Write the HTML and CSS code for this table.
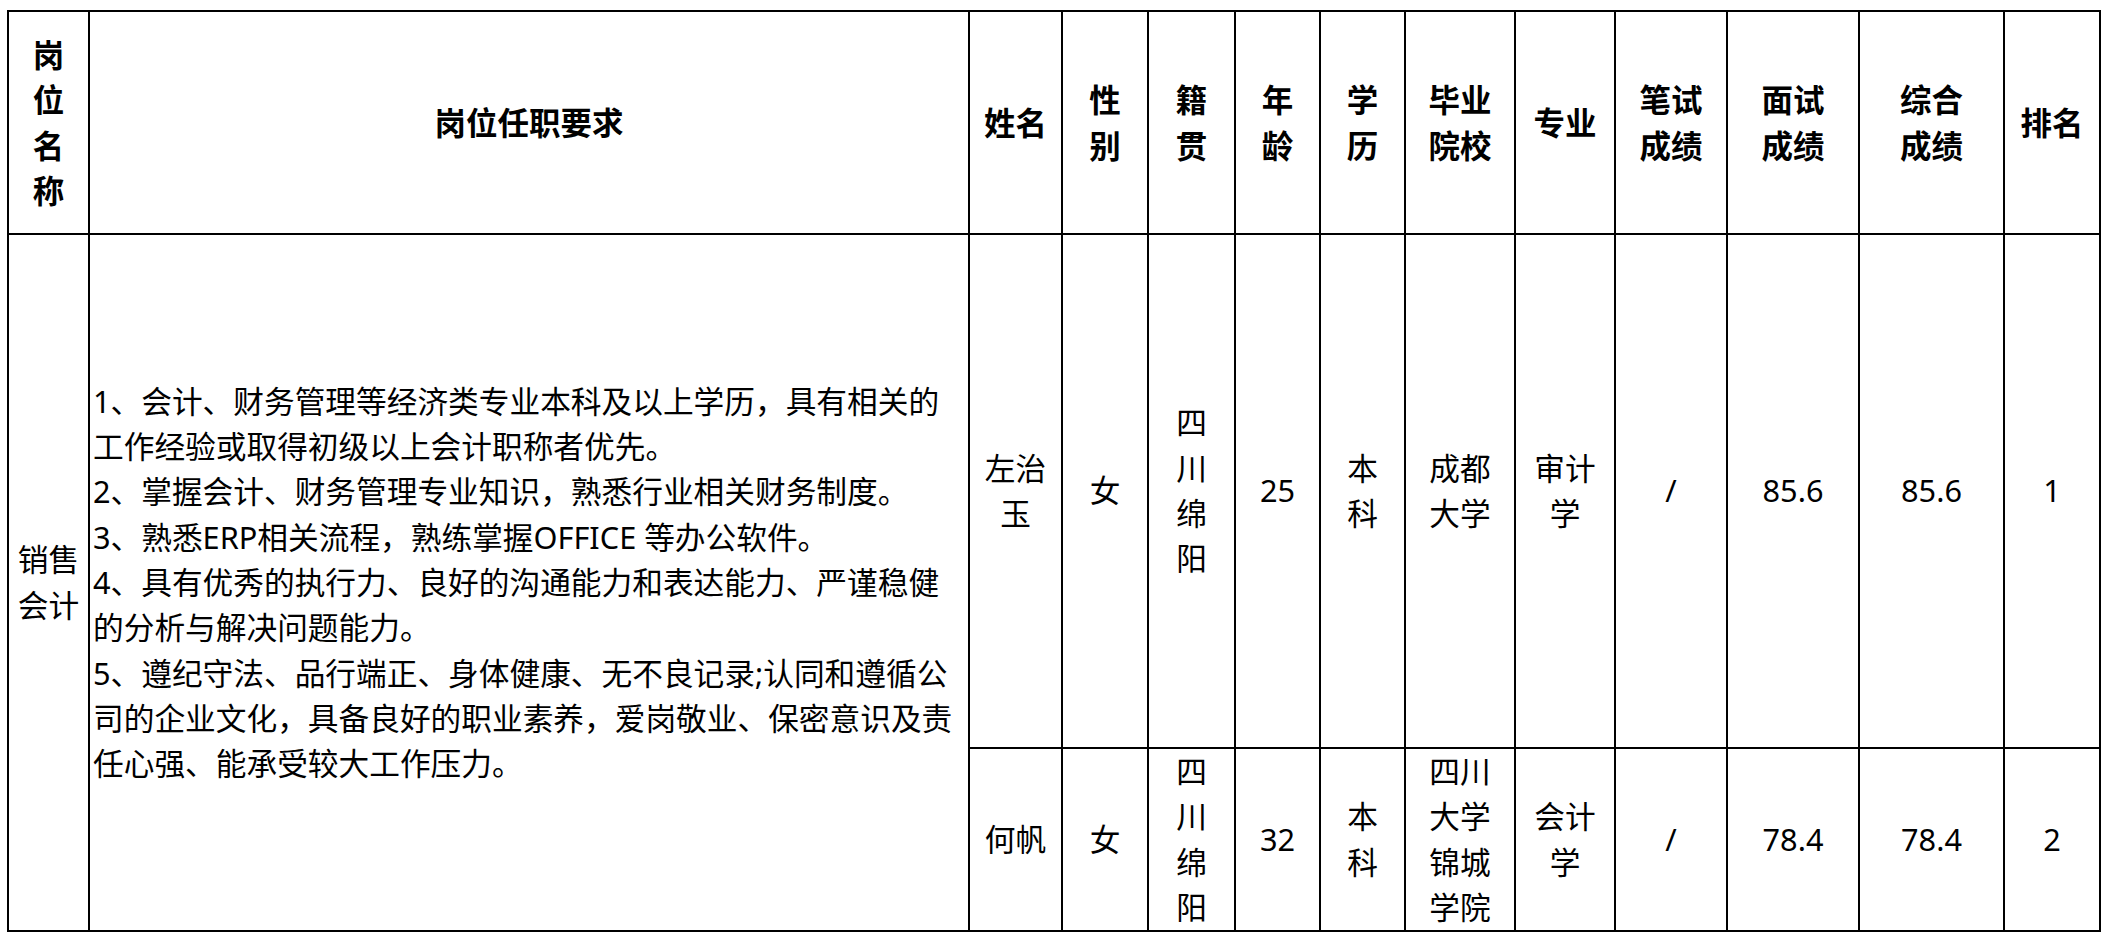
FILE: index.html
```html
<!DOCTYPE html>
<html lang="zh-CN">
<head>
<meta charset="utf-8">
<title>岗位任职要求</title>
<link rel="stylesheet" href="styles.css">
</head>
<body>
<table class="sheet">
  <colgroup>
    <col class="c-post">
    <col class="c-req">
    <col class="c-name">
    <col class="c-sex">
    <col class="c-home">
    <col class="c-age">
    <col class="c-edu">
    <col class="c-school">
    <col class="c-major">
    <col class="c-written">
    <col class="c-interview">
    <col class="c-total">
    <col class="c-rank">
  </colgroup>
  <thead>
    <tr class="head-row">
      <th>岗<br>位<br>名<br>称</th>
      <th>岗位任职要求</th>
      <th>姓名</th>
      <th>性<br>别</th>
      <th>籍<br>贯</th>
      <th>年<br>龄</th>
      <th>学<br>历</th>
      <th>毕业<br>院校</th>
      <th>专业</th>
      <th>笔试<br>成绩</th>
      <th>面试<br>成绩</th>
      <th>综合<br>成绩</th>
      <th>排名</th>
    </tr>
  </thead>
  <tbody>
    <tr class="row-one">
      <td rowspan="2">销售<br>会计</td>
      <td rowspan="2" class="req">1、会计、财务管理等经济类专业本科及以上学历，具有相关的<br>工作经验或取得初级以上会计职称者优先。<br>2、掌握会计、财务管理专业知识，熟悉行业相关财务制度。<br>3、熟悉ERP相关流程，熟练掌握OFFICE 等办公软件。<br>4、具有优秀的执行力、良好的沟通能力和表达能力、严谨稳健<br>的分析与解决问题能力。<br>5、遵纪守法、品行端正、身体健康、无不良记录;认同和遵循公<br>司的企业文化，具备良好的职业素养，爱岗敬业、保密意识及责<br>任心强、能承受较大工作压力。</td>
      <td>左治<br>玉</td>
      <td>女</td>
      <td>四<br>川<br>绵<br>阳</td>
      <td>25</td>
      <td>本<br>科</td>
      <td>成都<br>大学</td>
      <td>审计<br>学</td>
      <td>/</td>
      <td>85.6</td>
      <td>85.6</td>
      <td>1</td>
    </tr>
    <tr class="row-two">
      <td>何帆</td>
      <td>女</td>
      <td>四<br>川<br>绵<br>阳</td>
      <td>32</td>
      <td>本<br>科</td>
      <td>四川<br>大学<br>锦城<br>学院</td>
      <td>会计<br>学</td>
      <td>/</td>
      <td>78.4</td>
      <td>78.4</td>
      <td>2</td>
    </tr>
  </tbody>
</table>
</body>
</html>
```

FILE: styles.css
```css
html, body {
  margin: 0;
  padding: 0;
  background: #ffffff;
}

body {
  padding: 10px 0 0 7px;
  font-family: "Noto Sans", "Noto Sans CJK SC", sans-serif;
  color: #000000;
}

.sheet {
  border-collapse: collapse;
  table-layout: fixed;
  width: 2094px;
  line-height: 45.3px;
}

.sheet th,
.sheet td {
  border: 2px solid #000000;
  padding: 0;
  text-align: center;
  vertical-align: middle;
  white-space: nowrap;
}

.sheet th {
  font-size: 31.5px;
  font-weight: 700;
}

.sheet td {
  font-size: 30.7px;
  font-weight: 400;
}

.sheet td.req {
  text-align: left;
  padding-left: 3px;
}

.head-row { height: 223px; }
.row-one { height: 514px; }
.row-two { height: 183px; }

.c-post { width: 81px; }
.c-req { width: 880px; }
.c-name { width: 93px; }
.c-sex { width: 86px; }
.c-home { width: 87px; }
.c-age { width: 85px; }
.c-edu { width: 85px; }
.c-school { width: 110px; }
.c-major { width: 100px; }
.c-written { width: 112px; }
.c-interview { width: 132px; }
.c-total { width: 145px; }
.c-rank { width: 96px; }
```
